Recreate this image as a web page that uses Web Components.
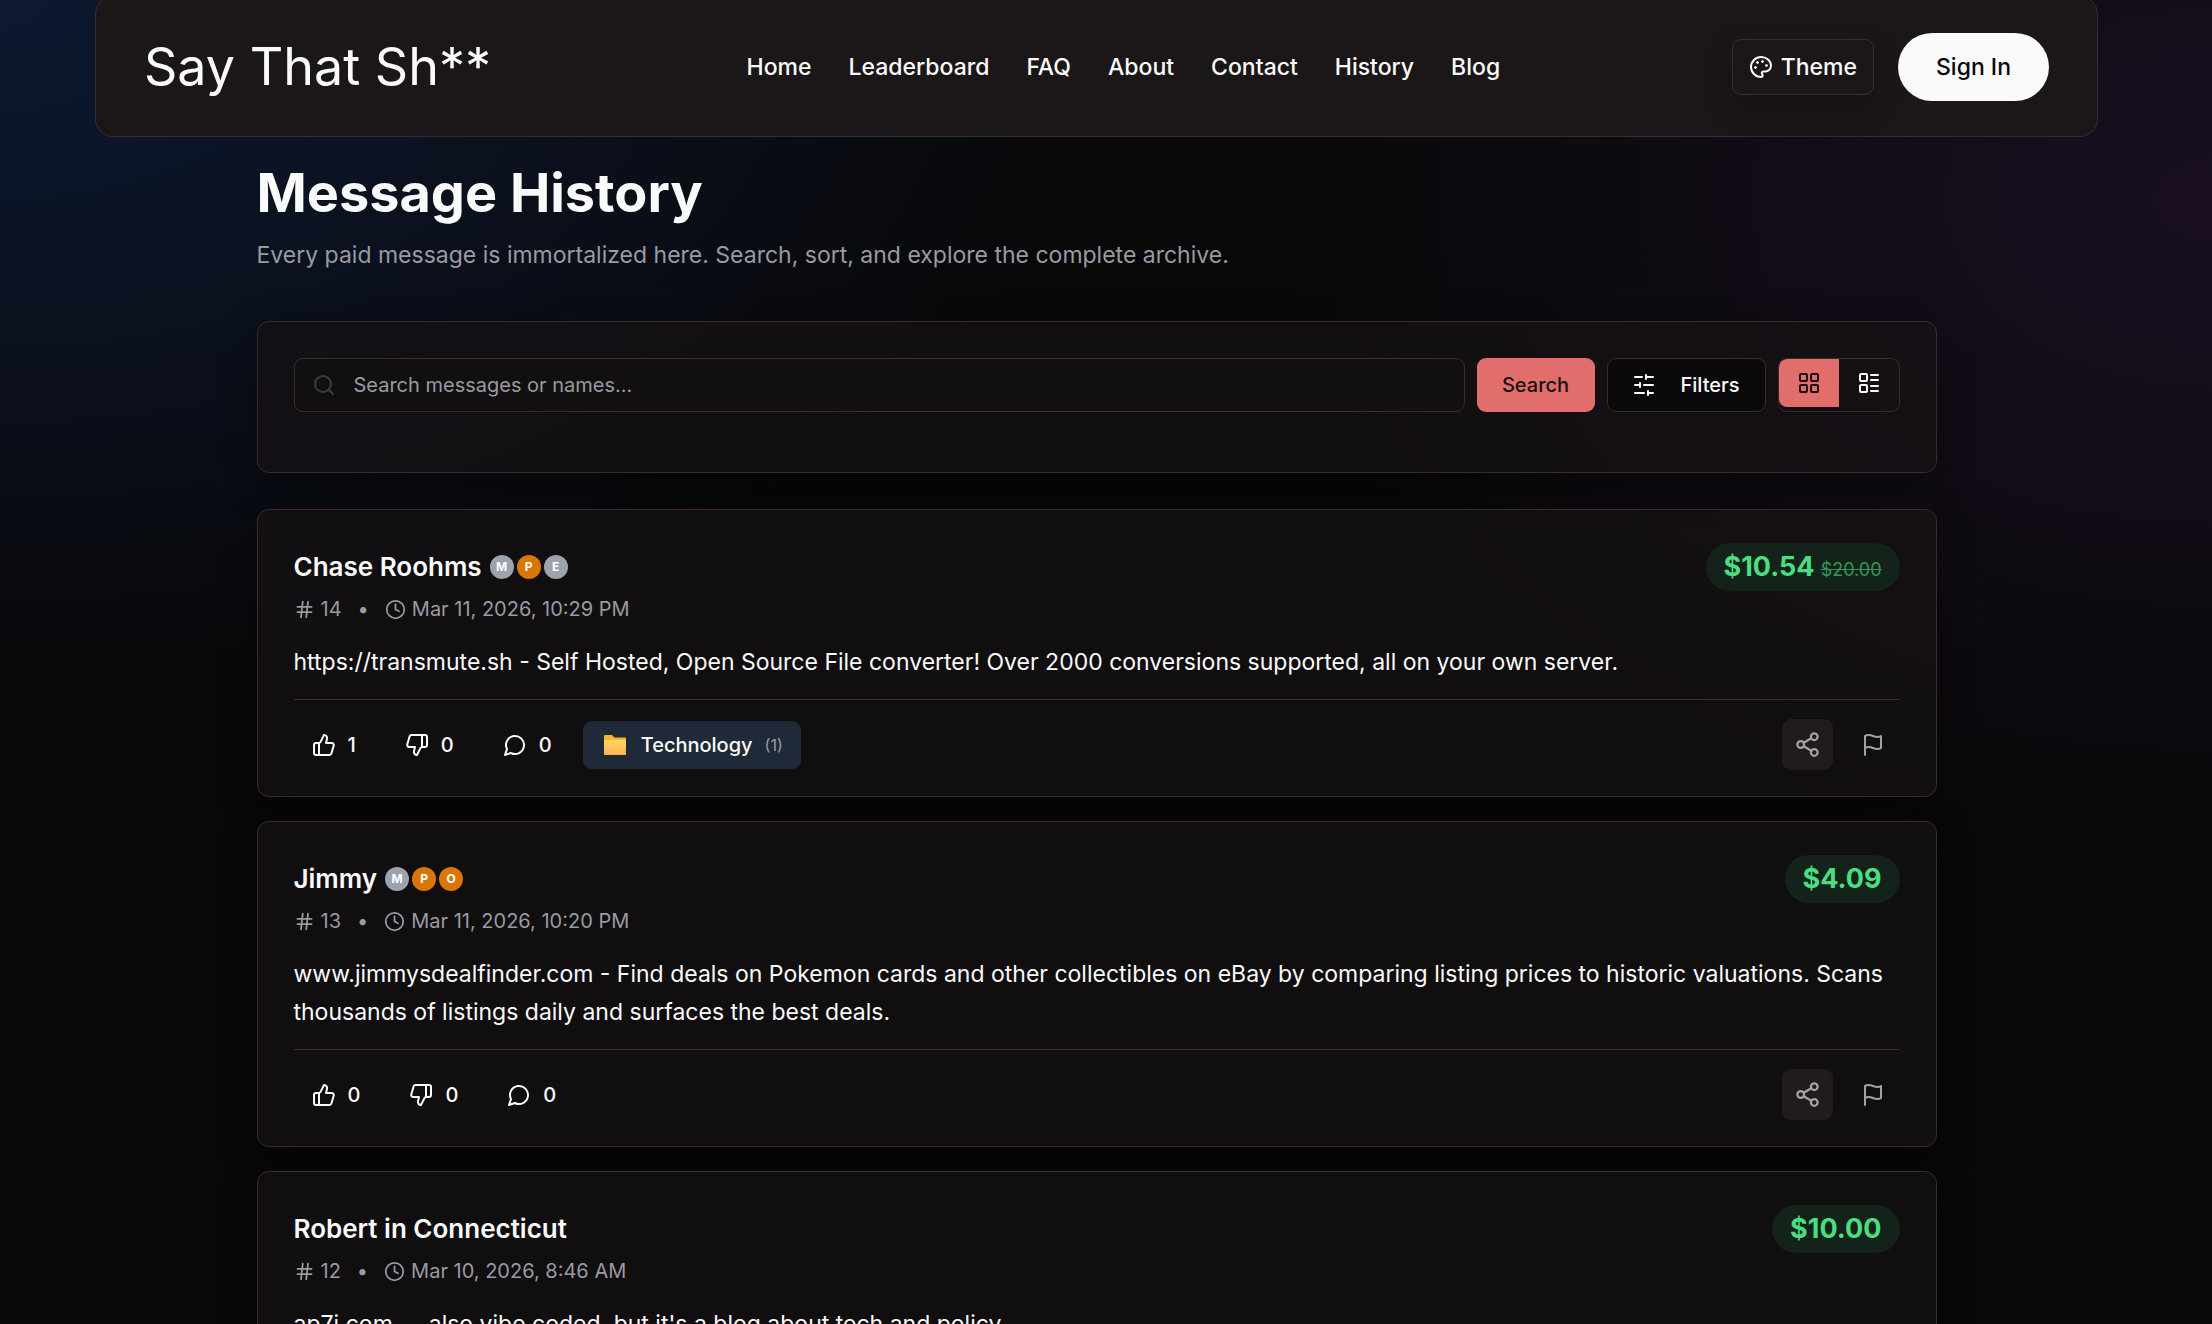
<!DOCTYPE html>
<html lang="en">
<head>
<meta charset="utf-8">
<meta name="viewport" content="width=device-width, initial-scale=1">
<title>Message History</title>
<style>
  :root {
    --card: rgba(23, 19, 20, .65);
    --border: #3b2b2c;
    --accent: #e26d6d;
    --text: #fafafa;
    --muted: #9a9aa3;
  }
  * { box-sizing: border-box; }
  body {
    margin: 0;
    height: 100vh;
    overflow: hidden;
    padding-right: 19px;
    color: var(--text);
    font-family: Inter, "Liberation Sans", sans-serif;
    background:
      radial-gradient(ellipse 50% 52% at 0 0, #0d1932, transparent),
      radial-gradient(ellipse 42% 50% at 100% 15%, #190f20, transparent),
      #080809;
  }
  main { max-width: 1680px; margin: 0 auto; }
  h1 { margin: 24px 0 0; font-size: 54px; line-height: 64px; font-weight: 700; }
  .lead { margin: 12px 0 0; font-size: 23px; line-height: 36px; color: var(--muted); }
  search-panel { margin-top: 48px; }
  .list { display: flex; flex-direction: column; gap: 24px; margin-top: 36px; }
</style>
</head>
<body>
  <site-header>
    <a slot="nav" href="#home">Home</a>
    <a slot="nav" href="#leaderboard">Leaderboard</a>
    <a slot="nav" href="#faq">FAQ</a>
    <a slot="nav" href="#about">About</a>
    <a slot="nav" href="#contact">Contact</a>
    <a slot="nav" href="#history">History</a>
    <a slot="nav" href="#blog">Blog</a>
  </site-header>

  <main>
    <h1>Message History</h1>
    <p class="lead">Every paid message is immortalized here. Search, sort, and explore the complete archive.</p>

    <search-panel></search-panel>

    <div class="list">
      <message-card name="Chase Roohms" number="14" date="Mar 11, 2026, 10:29 PM" price="$10.54" was="$20.00" likes="1" topic="Technology" votes="(1)">
        <rank-badge slot="badges">M</rank-badge>
        <rank-badge slot="badges" gold>P</rank-badge>
        <rank-badge slot="badges">E</rank-badge>
        https://transmute.sh - Self Hosted, Open Source File converter! Over 2000 conversions supported, all on your own server.
      </message-card>
      <message-card name="Jimmy" number="13" date="Mar 11, 2026, 10:20 PM" price="$4.09" likes="0">
        <rank-badge slot="badges">M</rank-badge>
        <rank-badge slot="badges" gold>P</rank-badge>
        <rank-badge slot="badges" gold>O</rank-badge>
        www.jimmysdealfinder.com - Find deals on Pokemon cards and other collectibles on eBay by comparing listing prices to historic valuations. Scans thousands of listings daily and surfaces the best deals.
      </message-card>
      <message-card name="Robert in Connecticut" number="12" date="Mar 10, 2026, 8:46 AM" price="$10.00" likes="0">
        ap7i.com — also vibe coded, but it's a blog about tech and policy.
      </message-card>
    </div>
  </main>

<script>
// Outline icons, all on a 24x24 grid
const ICONS = {
  palette: '<g fill="currentColor" stroke-width="1"><circle cx="13.5" cy="6.5" r="1"/><circle cx="17.5" cy="10.5" r="1"/><circle cx="8.5" cy="7.5" r="1"/><circle cx="6.5" cy="12.5" r="1"/></g><path d="M12 2C6.5 2 2 6.5 2 12s4.5 10 10 10c.926 0 1.648-.746 1.648-1.688 0-.437-.18-.835-.437-1.125-.29-.289-.438-.652-.438-1.125a1.64 1.64 0 0 1 1.668-1.668h1.996c3.051 0 5.555-2.503 5.555-5.554C21.965 6.012 17.461 2 12 2z"/>',
  search: '<circle cx="11" cy="11" r="8"/><path d="m21 21-4.3-4.3"/>',
  sliders: '<path d="M21 4h-7M10 4H3M21 12h-9M8 12H3M21 20h-5M12 20H3M14 2v4M8 10v4M16 18v4"/>',
  grid: '<rect x="3" y="3" width="7" height="7" rx="1"/><rect x="14" y="3" width="7" height="7" rx="1"/><rect x="14" y="14" width="7" height="7" rx="1"/><rect x="3" y="14" width="7" height="7" rx="1"/>',
  list: '<rect x="3" y="3" width="7" height="7" rx="1"/><rect x="3" y="14" width="7" height="7" rx="1"/><path d="M14 4h7M14 9h7M14 15h7M14 20h7"/>',
  hash: '<path d="M4 9h16M4 15h16M10 3 8 21M16 3l-2 18"/>',
  clock: '<circle cx="12" cy="12" r="10"/><path d="M12 6v6l4 2"/>',
  up: '<path d="M7 10v12"/><path d="M15 5.88 14 10h5.83a2 2 0 0 1 1.92 2.56l-2.33 8A2 2 0 0 1 17.5 22H4a2 2 0 0 1-2-2v-8a2 2 0 0 1 2-2h2.76a2 2 0 0 0 1.79-1.11L12 2a3.13 3.13 0 0 1 3 3.88Z"/>',
  down: '<path d="M17 14V2"/><path d="M9 18.12 10 14H4.17a2 2 0 0 1-1.92-2.56l2.33-8A2 2 0 0 1 6.5 2H20a2 2 0 0 1 2 2v8a2 2 0 0 1-2 2h-2.76a2 2 0 0 0-1.79 1.11L12 22a3.13 3.13 0 0 1-3-3.88Z"/>',
  comment: '<path d="M7.9 20A9 9 0 1 0 4 16.1L2 22Z"/>',
  share: '<circle cx="18" cy="5" r="3"/><circle cx="6" cy="12" r="3"/><circle cx="18" cy="19" r="3"/><path d="m8.59 13.51 6.83 3.98M15.41 6.51l-6.82 3.98"/>',
  flag: '<path d="M4 15s1-1 4-1 5 2 8 2 4-1 4-1V3s-1 1-4 1-5-2-8-2-4 1-4 1zM4 22v-7"/>',
  folder: '<defs><linearGradient id="f" x2="0" y2="1"><stop offset="0" stop-color="#ffd75e"/><stop offset="1" stop-color="#ffb357"/></linearGradient></defs><path stroke="none" fill="#f5b52e" d="M1 3q0-1 1-1h7l2.500 2.500H22q1 0 1 1v4H1z"/><path stroke="none" fill="url(#f)" d="M1 7h22v14q0 1-1 1H2q-1 0-1-1z"/>'
};

class AppIcon extends HTMLElement {
  connectedCallback() {
    const shadow = this.attachShadow({ mode: 'open' });
    shadow.innerHTML = `
      <style>
        :host { display: block; flex: none; width: 24px; height: 24px; }
        svg { display: block; width: 100%; height: 100%; }
      </style>
      <svg viewBox="0 0 24 24" fill="none" stroke="currentColor" stroke-width="2" stroke-linecap="round" stroke-linejoin="round" aria-hidden="true">${ICONS[this.getAttribute('name')]}</svg>`;
  }
}

class RankBadge extends HTMLElement {
  connectedCallback() {
    const shadow = this.attachShadow({ mode: 'open' });
    shadow.innerHTML = `
      <style>
        :host {
          display: grid; place-items: center; width: 24px; height: 24px;
          border-radius: 50%; background: #9ca3af; color: #fff;
          font-size: 12px; line-height: 12px; font-weight: 700;
        }
        :host([gold]) { background: #d97706; }
      </style>
      <slot></slot>`;
  }
}

class SiteHeader extends HTMLElement {
  connectedCallback() {
    const shadow = this.attachShadow({ mode: 'open' });
    shadow.innerHTML = `
      <style>
        :host { display: block; margin: -4px 95px 0; }
        header {
          display: flex; align-items: center; justify-content: space-between;
          box-sizing: border-box; height: 141px; padding: 0 48px;
          background: #1b1718; border: 1px solid var(--border); border-radius: 18px;
        }
        a { text-decoration: none; color: inherit; }
        .logo { font-size: 52px; line-height: 64px; padding-right: 24px; }
        nav { display: flex; gap: 37px; }
        ::slotted(a) { color: inherit; text-decoration: none; font-size: 23px; line-height: 36px; font-weight: 500; }
        .actions { display: flex; align-items: center; gap: 24px; }
        button { font: inherit; color: inherit; font-size: 23px; font-weight: 500; }
        .theme {
          display: flex; align-items: center; justify-content: center; gap: 8px;
          height: 56px; padding: 0 16px; background: #1b1718;
          border: 1px solid var(--border); border-radius: 9px;
          box-shadow: 0 12px 30px rgba(0, 0, 0, .25);
        }
        .sign { height: 68px; padding: 0 38px; border: 0; border-radius: 34px; background: #fafafa; color: #09090b; }
      </style>
      <header>
        <a class="logo" href="#home">Say That Sh**</a>
        <nav><slot name="nav"></slot></nav>
        <div class="actions">
          <button class="theme"><app-icon name="palette"></app-icon>Theme</button>
          <button class="sign">Sign In</button>
        </div>
      </header>`;
  }
}

class SearchPanel extends HTMLElement {
  connectedCallback() {
    const shadow = this.attachShadow({ mode: 'open' });
    shadow.innerHTML = `
      <style>
        :host {
          display: block; box-sizing: border-box; padding: 36px 36px 60px;
          background: var(--card); border: 1px solid var(--border); border-radius: 12px;
          box-shadow: 0 12px 36px rgba(0, 0, 0, .35);
        }
        form { display: flex; gap: 12px; }
        button, input { box-sizing: border-box; height: 54px; font: inherit; font-size: 20px; color: inherit; }
        label {
          flex: 1; display: flex; align-items: center; gap: 18px; padding: 0 17px;
          border: 1px solid var(--border); border-radius: 9px;
          background: #110f10; box-sizing: border-box; height: 54px;
        }
        label app-icon { color: #3d3c40; }
        input { flex: 1; min-width: 0; padding: 0; border: 0; outline: 0; background: none; }
        input::placeholder { color: var(--muted); opacity: 1; }
        button { font-weight: 500; border-radius: 9px; }
        .go { width: 118px; border: 0; background: var(--accent); color: #1a1012; }
        .filters {
          display: flex; align-items: center; justify-content: center; gap: 24px;
          width: 159px; background: #09090b; border: 1px solid var(--border);
        }
        .view { display: flex; box-sizing: border-box; height: 54px; border: 1px solid var(--border); border-radius: 9px; overflow: hidden; }
        .view button { display: grid; place-items: center; width: 60px; height: 48px; border: 0; border-radius: 0; background: none; padding: 0; }
        .view .on { background: var(--accent); color: #1a1012; border-radius: 8px 0 0 8px; }
      </style>
      <form>
        <label><app-icon name="search"></app-icon><input type="text" placeholder="Search messages or names..." aria-label="Search messages or names"></label>
        <button class="go" type="button">Search</button>
        <button class="filters" type="button"><app-icon name="sliders"></app-icon>Filters</button>
        <div class="view">
          <button class="on" type="button" aria-label="Grid view"><app-icon name="grid"></app-icon></button>
          <button type="button" aria-label="List view"><app-icon name="list"></app-icon></button>
        </div>
      </form>`;
  }
}

class MessageCard extends HTMLElement {
  connectedCallback() {
    const get = (key) => this.getAttribute(key) || '';
    const was = get('was') ? `<s>${get('was')}</s>` : '';
    // the topic button only shows once somebody has voted for a category
    const topic = get('topic')
      ? `<button class="topic"><app-icon name="folder"></app-icon>${get('topic')} <small>${get('votes')}</small></button>` : '';
    const shadow = this.attachShadow({ mode: 'open' });
    shadow.innerHTML = `
      <style>
        :host {
          display: block; box-sizing: border-box; padding: 33px 36px 26px;
          background: var(--card); border: 1px solid var(--border); border-radius: 12px;
          box-shadow: 0 12px 36px rgba(0, 0, 0, .35);
        }
        .top, .who, .meta, .meta span, .bar, .badges { display: flex; align-items: center; }
        .top { justify-content: space-between; align-items: flex-start; }
        .who { gap: 8px; height: 48px; }
        h2 { margin: 0; font-size: 26px; line-height: 36px; font-weight: 600; }
        .badges { gap: 3px; }
        .price {
          display: flex; align-items: baseline; gap: 6px; box-sizing: border-box; height: 48px; padding: 0 18px;
          border-radius: 24px; background: #13231a; color: #4ade80;
          font-size: 27px; line-height: 48px; font-weight: 700;
        }
        s { font-size: 18px; font-weight: 400; opacity: .6; }
        .meta { gap: 16px; height: 36px; color: var(--muted); font-size: 20px; line-height: 30px; }
        .meta span { gap: 6px; }
        .meta app-icon { width: 21px; height: 21px; }
        p { margin: 16px 0 18px; font-size: 23px; line-height: 38px; }
        .bar { gap: 13px; padding-top: 19px; border-top: 1px solid var(--border); }
        button {
          display: flex; align-items: center; gap: 12px; height: 48px; padding: 0 18px; border: 0; border-radius: 9px;
          background: none; color: inherit; font: inherit; font-size: 20px; font-weight: 500;
        }
        .topic { padding-left: 20px; background: #1f2937; }
        .topic app-icon { margin-right: 2px; }
        small { font-size: 16px; font-weight: 400; color: var(--muted); }
        .tool { width: 54px; height: 51px; padding: 0; justify-content: center; color: #a1a1aa; }
        .share { width: 51px; margin-left: auto; background: #211b1b; }
        .share app-icon { width: 27px; height: 27px; }
      </style>
      <div class="top">
        <div class="who"><h2>${get('name')}</h2><div class="badges"><slot name="badges"></slot></div></div>
        <div class="price">${get('price')}${was}</div>
      </div>
      <div class="meta">
        <span><app-icon name="hash"></app-icon>${get('number')}</span>
        <span>•</span>
        <span><app-icon name="clock"></app-icon>${get('date')}</span>
      </div>
      <p><slot></slot></p>
      <div class="bar">
        <button aria-label="Like"><app-icon name="up"></app-icon>${get('likes')}</button>
        <button aria-label="Dislike"><app-icon name="down"></app-icon>0</button>
        <button aria-label="Comments"><app-icon name="comment"></app-icon>0</button>
        ${topic}
        <button class="tool share" aria-label="Share"><app-icon name="share"></app-icon></button>
        <button class="tool" aria-label="Report"><app-icon name="flag"></app-icon></button>
      </div>`;
  }
}

customElements.define('app-icon', AppIcon);
customElements.define('rank-badge', RankBadge);
customElements.define('site-header', SiteHeader);
customElements.define('search-panel', SearchPanel);
customElements.define('message-card', MessageCard);
</script>
</body>
</html>
